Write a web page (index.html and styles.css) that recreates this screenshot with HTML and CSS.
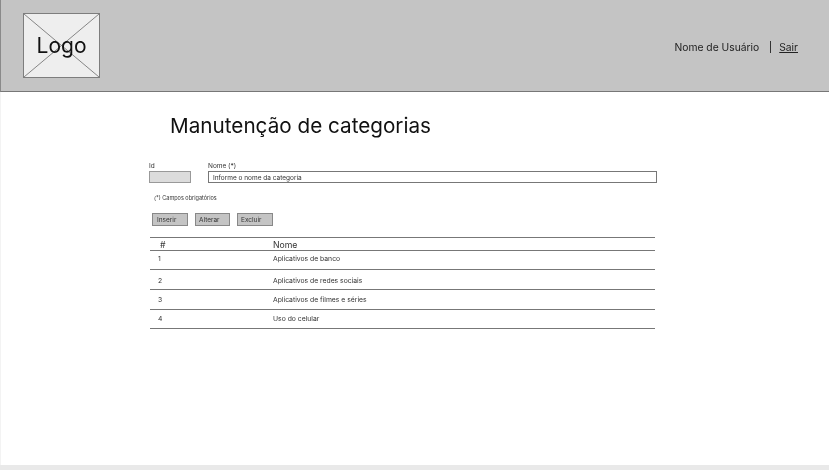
FILE: index.html
```html
<!DOCTYPE html>
<html lang="pt-BR">
<head>
  <meta charset="UTF-8">
  <meta name="viewport" content="width=device-width, initial-scale=1">
  <title>Manutenção de categorias</title>
  <link rel="stylesheet" href="styles.css">
</head>
<body>
  <header class="topo">
    <div class="logo">
      <svg class="logo-x" viewBox="0 0 75 63" preserveAspectRatio="none">
        <line x1="0" y1="0" x2="75" y2="63"></line>
        <line x1="75" y1="0" x2="0" y2="63"></line>
      </svg>
      <span class="logo-texto">Logo</span>
    </div>
    <div class="usuario">
      <span>Nome de Usuário</span>
      <span class="separador"></span>
      <a href="#" class="sair">Sair</a>
    </div>
  </header>

  <main class="conteudo">
    <h1>Manutenção de categorias</h1>

    <div class="campos">
      <div class="campo campo-id">
        <label>Id</label>
        <div class="caixa caixa-id"></div>
      </div>
      <div class="campo campo-nome">
        <label>Nome (*)</label>
        <div class="caixa caixa-nome">Informe o nome da categoria</div>
      </div>
    </div>

    <p class="aviso">(*) Campos obrigatórios</p>

    <div class="botoes">
      <button>Inserir</button>
      <button>Alterar</button>
      <button>Excluir</button>
    </div>

    <table class="tabela">
      <thead>
        <tr><th class="col-id">#</th><th>Nome</th></tr>
      </thead>
      <tbody>
        <tr class="linha-1"><td class="col-id">1</td><td>Aplicativos de banco</td></tr>
        <tr class="linha-2"><td class="col-id">2</td><td>Aplicativos de redes sociais</td></tr>
        <tr class="linha-3"><td class="col-id">3</td><td>Aplicativos de filmes e séries</td></tr>
        <tr class="linha-4"><td class="col-id">4</td><td>Uso do celular</td></tr>
      </tbody>
    </table>
  </main>

  <div class="rodape"></div>
</body>
</html>
```

FILE: styles.css
```css
body {
  margin: 0;
  height: 470px;
  overflow: hidden;
  display: flex;
  flex-direction: column;
  font-family: Inter, 'Liberation Sans', sans-serif;
  background-color: #fff;
  color: #111;
}

.topo {
  height: 91px;
  flex-shrink: 0;
  display: flex;
  align-items: center;
  justify-content: space-between;
  padding: 0 31px 0 23px;
  background-color: #c4c4c4;
  border-left: 1px solid #8a8a8a;
  border-bottom: 1px solid #777;
  will-change: transform;
}

.logo {
  position: relative;
  width: 75px;
  height: 63px;
  margin-left: -1px;
  border: 1px solid #7d7d7d;
  background-color: #eee;
  display: flex;
  align-items: center;
  justify-content: center;
}

.logo-x {
  position: absolute;
  top: 0;
  left: 0;
  width: 100%;
  height: 100%;
}

.logo-x line {
  stroke: #858585;
  stroke-width: 1;
}

.logo-texto {
  position: relative;
  font-size: 21px;
  color: #111;
}

.usuario {
  display: flex;
  align-items: center;
  padding-top: 3px;
  font-size: 10.3px;
  color: #222;
}

.separador {
  width: 1px;
  height: 12px;
  margin: 0 8px 0 11px;
  background-color: #333;
}

.sair {
  color: #222;
  text-decoration: underline;
}

.conteudo {
  flex: 1;
  padding-left: 149px;
  border-left: 1px solid #f3f3f3;
  will-change: transform;
}

h1 {
  margin: 21px 0 0 20px;
  font-size: 20.7px;
  line-height: 26px;
  font-weight: 400;
  color: #111;
}

.campos {
  display: flex;
  gap: 17px;
  margin-top: 22px;
  margin-left: -1px;
}

label {
  display: block;
  height: 8px;
  font-size: 6.5px;
  line-height: 10px;
  color: #333;
}

.caixa {
  box-sizing: border-box;
  height: 12px;
  font-size: 6.5px;
  line-height: 12px;
}

.caixa-id {
  width: 42px;
  margin-top: 2px;
  background-color: #dcdcdc;
  border: 1px solid #999;
}

.caixa-nome {
  width: 449px;
  margin-top: 2px;
  padding-left: 4px;
  border: 1px solid #777;
  color: #333;
}

.aviso {
  margin: 11px 0 0 4px;
  font-size: 5.5px;
  line-height: 8px;
  color: #333;
}

.botoes {
  display: flex;
  gap: 7px;
  margin: 11px 0 0 2px;
}

button {
  box-sizing: border-box;
  width: 36px;
  height: 13px;
  padding: 0 0 0 3px;
  font-family: inherit;
  font-size: 6.5px;
  text-align: left;
  color: #333;
  background-color: #c4c4c4;
  border: 1px solid #888;
}

button:first-child {
  padding-left: 4px;
}

button:nth-child(2) {
  width: 35px;
}

.tabela {
  margin-top: 11px;
  width: 505px;
  border-collapse: collapse;
  table-layout: fixed;
  color: #333;
}

.tabela tr {
  border-bottom: 1px solid #777;
}

.tabela thead tr {
  border-top: 1px solid #777;
  height: 13px;
}

.tabela th {
  padding: 2px 0 0;
  font-size: 8.7px;
  line-height: 10px;
  font-weight: 400;
  text-align: left;
}

.tabela td {
  padding: 0;
  font-size: 6.8px;
  vertical-align: middle;
}

.tabela .col-id {
  width: 123px;
  box-sizing: border-box;
  padding-left: 8px;
}

.tabela th.col-id {
  padding-left: 10px;
}

.tabela .linha-1 td {
  padding-bottom: 3px;
}

.tabela .linha-2 td {
  padding-top: 1px;
}

.tabela .linha-4 td {
  padding-bottom: 2px;
}

.linha-1, .linha-4 {
  height: 19px;
}

.linha-2, .linha-3 {
  height: 20px;
}

.rodape {
  height: 5px;
  flex-shrink: 0;
  background-color: #e9e9e9;
}
```
